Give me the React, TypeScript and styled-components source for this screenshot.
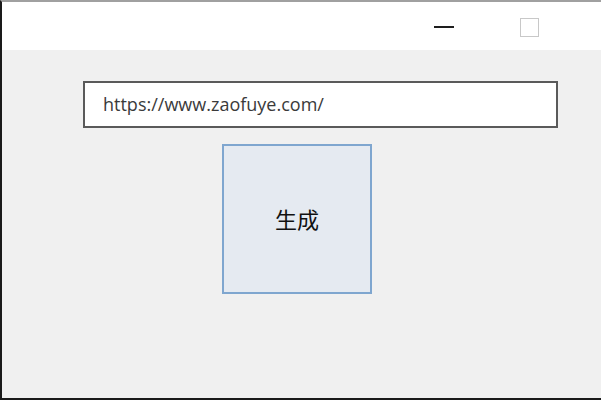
import React from 'react'
import styled, { createGlobalStyle } from 'styled-components'

const GlobalStyle = createGlobalStyle`
  html, body {
    margin: 0;
    padding: 0;
    background: #ffffff;
  }
  * {
    box-sizing: border-box;
  }
`

export const Window = styled.div`
  width: 601px;
  height: 400px;
  display: flex;
  flex-direction: column;
  background-color: #f0f0f0;
  border-top: 2px solid #a0a0a0;
  border-left: 2px solid #1a1a1a;
  border-bottom: 2px solid #1a1a1a;
  font-family: "Open Sans", "Noto Sans CJK SC", sans-serif;
`

export const TitleBar = styled.div`
  height: 48px;
  background-color: #ffffff;
  display: flex;
  justify-content: flex-end;
  align-items: center;
  padding-right: 62px;
  gap: 66px;
`

export const MinimizeIcon = styled.span`
  display: block;
  width: 20px;
  height: 2px;
  margin-top: 2px;
  background-color: #1e1e1e;
`

export const MaximizeIcon = styled.span`
  display: block;
  width: 19px;
  height: 19px;
  margin-top: 2px;
  border: 1px solid #c8c8c8;
`

export const Content = styled.div`
  flex: 1;
  display: flex;
  flex-direction: column;
  align-items: flex-start;
  padding: 31px 0 0 81px;
  gap: 16px;
`

export const UrlInput = styled.input`
  width: 475px;
  height: 47px;
  border: 2px solid #5a5a5a;
  background: #ffffff;
  padding: 0 0 2px 18px;
  font-family: "Open Sans", sans-serif;
  font-size: 18px;
  color: #3a3a3a;
  outline: none;
`

export const GenerateButton = styled.button`
  width: 150px;
  height: 150px;
  margin-left: 139px;
  border: 2px solid #7fa6cf;
  background-color: #e5eaf1;
  font-family: "Noto Sans CJK SC", sans-serif;
  font-size: 22px;
  color: #111111;
  padding: 0 0 2px 0;
  cursor: pointer;
`

export default function App() {
  return (
    <>
      <GlobalStyle />
      <Window>
        <TitleBar>
          <MinimizeIcon />
          <MaximizeIcon />
        </TitleBar>
        <Content>
          <UrlInput defaultValue="https://www.zaofuye.com/" />
          <GenerateButton>生成</GenerateButton>
        </Content>
      </Window>
    </>
  )
}
